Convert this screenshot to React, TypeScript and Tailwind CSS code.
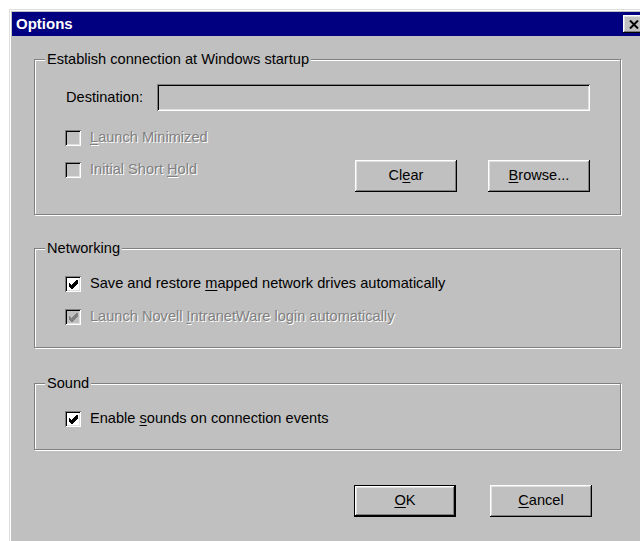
import type { ReactNode } from 'react'

const raised =
  'shadow-[inset_-1px_-1px_0_#000,inset_1px_1px_0_#fff,inset_-2px_-2px_0_#808080,inset_2px_2px_0_#dfdfdf]'
const sunken =
  'shadow-[inset_1px_1px_0_#808080,inset_-1px_-1px_0_#fff,inset_2px_2px_0_#000,inset_-2px_-2px_0_#dfdfdf]'
const grayed = 'text-[#808080] [text-shadow:1px_1px_0_#fff]'

// underlined access key
function Key({ children }: { children: ReactNode }) {
  return <span className="underline underline-offset-2 decoration-1">{children}</span>
}

function Check({ checked, disabled }: { checked?: boolean; disabled?: boolean }) {
  return (
    <span
      className={`w-4 h-4 shrink-0 flex items-center justify-center ${sunken} ${
        disabled ? 'bg-[#c0c0c0]' : 'bg-white'
      }`}
    >
      {checked && (
        <svg width="9" height="9" viewBox="0 0 7 7" shapeRendering="crispEdges">
          <polygon
            points="0,2 2,4 6,0 7,0 7,3 3,7 2,7 0,5"
            fill={disabled ? '#808080' : '#000'}
          />
        </svg>
      )}
    </span>
  )
}

function CheckRow({
  checked,
  disabled,
  children,
}: {
  checked?: boolean
  disabled?: boolean
  children: ReactNode
}) {
  return (
    <div className="h-5 flex items-center gap-[9px]">
      <Check checked={checked} disabled={disabled} />
      <span className={disabled ? grayed : 'text-black'}>{children}</span>
    </div>
  )
}

function Btn({ children, isDefault }: { children: ReactNode; isDefault?: boolean }) {
  return (
    <button
      className={`w-[102px] h-[32px] bg-[#c0c0c0] text-black flex items-center justify-center ${
        isDefault ? 'border border-black' : ''
      } ${raised}`}
    >
      {children}
    </button>
  )
}

function Group({
  title,
  className,
  children,
}: {
  title: string
  className: string
  children: ReactNode
}) {
  return (
    <div
      className={`relative w-[587px] border border-[#808080] shadow-[inset_1px_1px_0_#fff,1px_1px_0_#fff] pl-[30px] pr-[30px] ${className}`}
    >
      <span className="absolute left-[10px] -top-[9px] px-[2px] leading-4 bg-[#c0c0c0] text-black">
        {title}
      </span>
      {children}
    </div>
  )
}

export default function App() {
  return (
    <div className="w-[640px] h-[541px] overflow-hidden bg-white font-['Liberation_Sans',Arial,sans-serif] text-[14.6px]">
      <div className="ml-[9px] mt-[9px] w-[640px] h-[560px] bg-[#c0c0c0] border-t border-l border-[#dfdfdf] shadow-[inset_1px_1px_0_#fff] p-[2px] flex flex-col">
        {/* title bar */}
        <div className="h-[24px] bg-[#000080] flex items-center justify-between pl-[4px] pr-[3px]">
          <span className="text-white font-bold text-[15px]">Options</span>
          <span className={`w-[21px] h-[18px] bg-[#c0c0c0] flex items-center justify-center ${raised}`}>
            <svg width="10" height="9" viewBox="0 0 10 9">
              <path d="M1 0.5 L9 8.5 M9 0.5 L1 8.5" stroke="#000" strokeWidth="2" />
            </svg>
          </span>
        </div>

        <div className="pl-[22px] flex flex-col">
          <Group title="Establish connection at Windows startup" className="mt-[23px] h-[156px] pt-[24px]">
            <div className="flex items-center h-[27px]">
              <span className="w-[92px] pl-px text-black">Destination:</span>
              <div className={`flex-1 h-[27px] bg-[#c0c0c0] ${sunken}`} />
            </div>
            <div className="mt-[17px] flex">
              <div className="flex flex-col gap-[12px]">
                <CheckRow disabled>
                  <Key>L</Key>aunch Minimized
                </CheckRow>
                <CheckRow disabled>
                  Initial Short <Key>H</Key>old
                </CheckRow>
              </div>
              <div className="flex-1" />
              <div className="pt-[32px] flex gap-[31px]">
                <Btn>
                  Cl<Key>e</Key>ar
                </Btn>
                <Btn>
                  <Key>B</Key>rowse...
                </Btn>
              </div>
            </div>
          </Group>

          <Group title="Networking" className="mt-[33px] h-[100px] pt-[25px]">
            <div className="flex flex-col gap-[13px]">
              <CheckRow checked>
                Save and restore <Key>m</Key>apped network drives automatically
              </CheckRow>
              <CheckRow checked disabled>
                Launch Novell <Key>I</Key>ntranetWare login automatically
              </CheckRow>
            </div>
          </Group>

          <Group title="Sound" className="mt-[35px] h-[67px] pt-[25px]">
            <CheckRow checked>
              Enable <Key>s</Key>ounds on connection events
            </CheckRow>
          </Group>

          <div className="mt-[35px] pl-[320px] flex gap-[34px]">
            <Btn isDefault>
              <Key>O</Key>K
            </Btn>
            <Btn>
              <Key>C</Key>ancel
            </Btn>
          </div>
        </div>
      </div>
    </div>
  )
}
